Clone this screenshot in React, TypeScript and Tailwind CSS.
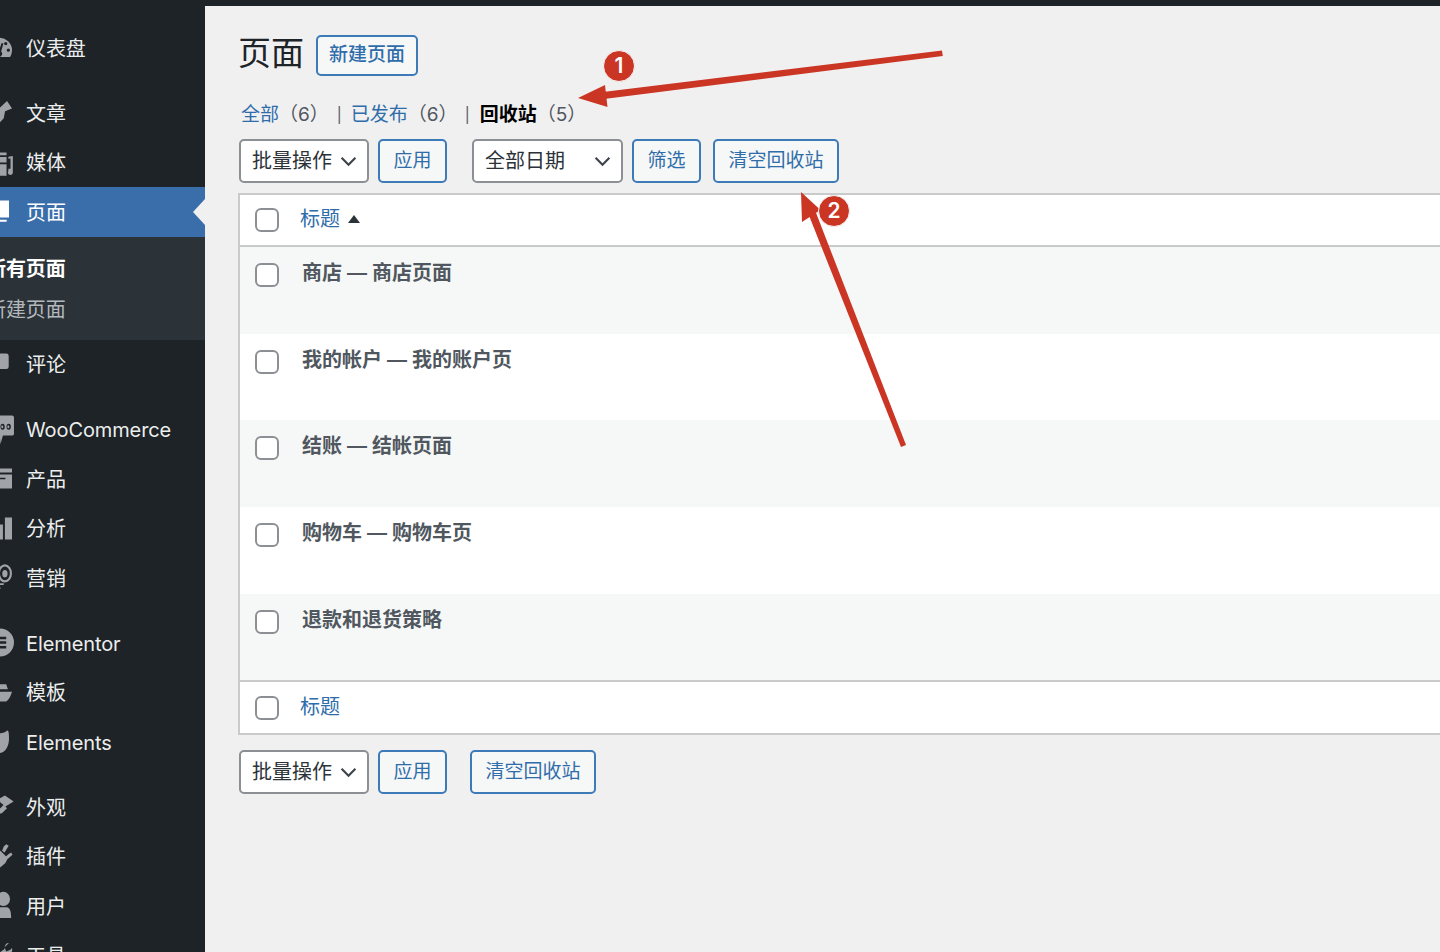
const font = "[font-family:Inter,'Noto_Sans_CJK_SC',sans-serif]";

// Admin menu icons, cut off by the left edge of the window like in the screenshot
const icons: Record<string, React.ReactNode> = {
  dashboard: (
    <path
      fillRule="evenodd"
      d="M12 4a8 7.500 0 0 0-8 7.500c0 1.500.5 3 1.200 4.300h13.600c.8-1.300 1.200-2.800 1.200-4.300A8 7.500 0 0 0 12 4Zm4.200 2.600a1 1 0 1 1 0 2 1 1 0 0 1 0-2Zm1.600 4a1 1 0 1 1 0 2 1 1 0 0 1 0-2ZM14.800 7.500 13.400 12.400a1.800 1.800 0 1 1-1.300-.4l1.600-4.800Z"
    />
  ),
  posts: <path d="M17 3 20 7.600 15.800 9.200 15 13.500 12.700 16 10 14 8 8 12.800 7Z" />,
  media: (
    <path d="M10 4h6.700v1.600H10Zm0 2.600h6.700V10H10Zm0 4.400h6.700v7H10ZM17.800 6.500 20.500 6v10a1.500 1.500 0 1 1-2.700-.9v-1.300h1.300V7.500l-1.300.2Z" />
  ),
  pages: <path d="M8 3.300h10.200v10.300H8Zm0 11.700h8.800v1.200H8Z" />,
  comments: <path d="M8 3.300h8.500A1.500 1.500 0 0 1 18 4.800v6.500a1.500 1.500 0 0 1-1.500 1.500H12l-3 2.500Z" />,
  woo: (
    <>
      <path d="M8 1.500h12a1.200 1.200 0 0 1 1.200 1.200v9.800a1.200 1.200 0 0 1-1.200 1.200h-5.500L13 19l-.3-4.300H8Z" />
      <path
        fill="#1d2327"
        fillRule="evenodd"
        d="M14.300 6.500a1.300 1.800 0 1 1 0 3.600 1.300 1.800 0 0 1 0-3.600Zm0 1a.6.9 0 1 0 0 1.700.6.9 0 0 0 0-1.700ZM18 6.500a1.300 1.800 0 1 1 0 3.600 1.300 1.800 0 0 1 0-3.600Zm0 1a.6.9 0 1 0 0 1.700.6.9 0 0 0 0-1.700Z"
      />
    </>
  ),
  products: <path d="M10 4h10v2.400H10Zm0 3.600h10V16H10Zm0 1.900v1h6v-1Z" />,
  analytics: <path d="M10 7.500h4.500v9.200H10Zm5.700-4.200H20v13.400h-4.300Z" />,
  marketing: (
    <>
      <path
        fillRule="evenodd"
        d="M15.700 2a4.300 5.500 0 1 1 0 11 4.300 5.500 0 0 1 0-11Zm0 1.300a3 4.200 0 1 0 0 8.400 3 4.200 0 0 0 0-8.400Z"
      />
      <path d="M15.700 5.500a1.600 2.200 0 1 1 0 4.400 1.600 2.200 0 0 1 0-4.400ZM10 13.500h5v1h-5Zm1 2.500h2v1h-2Z" />
    </>
  ),
  elementor: (
    <path
      fillRule="evenodd"
      d="M12.700 1.500a8.500 8.500 0 1 1 0 17 8.500 8.500 0 0 1 0-17ZM16.500 6.500H10V8h6.500Zm0 2.800H10v1.500h6.500Zm0 2.800H10v1.500h6.500Z"
    />
  ),
  templates: <path d="M10 5h6.500l1 3H10Zm0 4.500h10c-.8 2.500-2 5.500-4 6h-6Z" />,
  elements: <path d="M10 5c3 0 5.500 0 7-1.700 1-.3 1.200 1.700 1.200 4.700 0 5-2.200 9-6.200 9h-2Z" />,
  appearance: <path d="M12 5.500 15.700 3.300 21 7l-5 3-3-2.500ZM12 12l3-3 2 2-3 3-2 .5Z" />,
  plugins: (
    <path d="m15 4 1.500-1.500 1.500 1-2.500 4-1.500-1Zm3 4.500 1.500-1 .8 1.500-3.500 3-1-1.500ZM10 6l3 .5 4.500 4.500-1.500 3-3 2.500-3-.5Z" />
  ),
  users: (
    <path d="M14.800 1.700a4 4.300 0 1 1 0 8.600 4 4.300 0 0 1 0-8.600ZM9 11h8c2 .5 2.500 3 2.500 6.500H9Z" />
  ),
  tools: <path d="M18 2.500 15.500 5l1 2.500 2.500-1 1-1c.5 2-.5 4-3 4.500L10 17v-7l5.500-4c0-2 1-3.800 2.500-3.500Z" />,
};

type Item = { label: string; icon: string; active?: boolean; gap?: boolean };

const menu: Item[] = [
  { label: "文章", icon: "posts", gap: true },
  { label: "媒体", icon: "media" },
  { label: "页面", icon: "pages", active: true },
];

const menu2: Item[] = [
  { label: "评论", icon: "comments" },
  { label: "WooCommerce", icon: "woo", gap: true },
  { label: "产品", icon: "products" },
  { label: "分析", icon: "analytics" },
  { label: "营销", icon: "marketing" },
  { label: "Elementor", icon: "elementor", gap: true },
  { label: "模板", icon: "templates" },
  { label: "Elements", icon: "elements" },
  { label: "外观", icon: "appearance", gap: true },
  { label: "插件", icon: "plugins" },
  { label: "用户", icon: "users" },
  { label: "工具", icon: "tools" },
];

function MenuRow({ item }: { item: Item }) {
  return (
    <div
      className={`relative flex h-[49.5px] shrink-0 items-center text-[20px] tracking-[-0.1px] ${item.gap ? "mt-[15.5px]" : ""} ${
        item.active ? "bg-[#396eaa] text-white" : "text-[#eceded]"
      }`}
    >
      <svg
        viewBox="0 0 20 20"
        className={`ml-[-21px] mr-[14px] h-[33px] w-[33px] shrink-0 overflow-visible ${item.active ? "fill-white" : "fill-[#a0a4a8]"}`}
      >
        {icons[item.icon]}
      </svg>
      <span className="pt-[2px]">{item.label}</span>
      {item.active && (
        <span className="absolute right-0 top-1/2 h-0 w-0 -translate-y-1/2 border-y-[13px] border-r-[12px] border-y-transparent border-r-[#f0f0f1]" />
      )}
    </div>
  );
}

function Checkbox() {
  return <span className="block h-[24px] w-[24px] shrink-0 rounded-[6px] border-2 border-[#8c8f94] bg-white" />;
}

function Btn({ children, className = "" }: { children: React.ReactNode; className?: string }) {
  return (
    <button
      className={`flex items-center justify-center rounded-[5px] border-2 border-[#3d7ab8] bg-[#f6f7f7] text-[19px] text-[#2f6daa] ${className}`}
    >
      {children}
    </button>
  );
}

function Select({ label, className = "" }: { label: string; className?: string }) {
  return (
    <div
      className={`flex h-[44px] items-center justify-between rounded-[5px] border-2 border-[#8c8f94] bg-white pl-[11px] pr-[10px] text-[20px] text-[#2c3338] ${className}`}
    >
      {label}
      <svg viewBox="0 0 16 16" className="h-[17px] w-[17px] fill-none stroke-[#3c434a] stroke-[2]">
        <path d="m1.500 4.500 6.500 6.500 6.500-6.500" />
      </svg>
    </div>
  );
}

const rows = ["商店 — 商店页面", "我的帐户 — 我的账户页", "结账 — 结帐页面", "购物车 — 购物车页", "退款和退货策略"];

export default function App() {
  return (
    <div className={`relative flex h-[952px] w-[1440px] overflow-hidden bg-[#1d2327] ${font}`}>
      {/* Sidebar */}
      <aside className="flex w-[205px] shrink-0 flex-col overflow-hidden pt-[23px]">
        <MenuRow item={{ label: "仪表盘", icon: "dashboard" }} />
        {menu.map((item) => (
          <MenuRow key={item.label} item={item} />
        ))}
        <div className="flex h-[103px] shrink-0 flex-col bg-[#2c3338] pt-[11px] text-[20px] tracking-[-0.1px]">
          <div className="ml-[-14px] flex h-[41px] items-center pt-[1px] font-semibold text-white">所有页面</div>
          <div className="ml-[-14px] flex h-[41px] items-center pt-[1px] text-[#b4b9be]">新建页面</div>
        </div>
        {menu2.map((item) => (
          <MenuRow key={item.label} item={item} />
        ))}
      </aside>

      {/* Main */}
      <main className="mt-[6px] min-w-0 flex-1 bg-[#f0f0f1] pl-[33px]">
        <div className="flex h-[41px] items-center mt-[29px]">
          <h1 className="mb-[5px] text-[33px] leading-[36px] text-[#1d2327]">页面</h1>
          <Btn className="ml-[12px] h-[41px] w-[102px] font-medium">新建页面</Btn>
        </div>

        <div className="mt-[25px] flex h-[28px] items-center pl-[3px] text-[19px] text-[#50575e]">
          <span className="text-[#2f6daa]">全部</span>
          <span>（6）</span>
          <span className="ml-[8px] mr-[9px] text-[15px]">|</span>
          <span className="text-[#2f6daa]">已发布</span>
          <span>（6）</span>
          <span className="ml-[7px] mr-[10px] text-[15px]">|</span>
          <span className="font-semibold text-black">回收站</span>
          <span>（5）</span>
        </div>

        <div className="mt-[10px] flex h-[44px] items-center">
          <Select label="批量操作" className="ml-px w-[130px]" />
          <Btn className="ml-[9px] h-[44px] w-[69px]">应用</Btn>
          <Select label="全部日期" className="ml-[25px] w-[151px]" />
          <Btn className="ml-[9px] h-[44px] w-[69px]">筛选</Btn>
          <Btn className="ml-[12px] h-[44px] w-[126px]">清空回收站</Btn>
        </div>

        {/* Table */}
        <div className="mr-[-8px] mt-[10px] border-2 border-[#c9cacc] bg-white">
          <div className="flex h-[52px] items-center border-b-2 border-[#c9cacc] pl-[15px]">
            <Checkbox />
            <span className="mb-[3px] ml-[21px] text-[20px] text-[#2f6daa]">标题</span>
            <span className="mb-[3px] ml-[8px] h-0 w-0 border-x-[6px] border-b-[8px] border-x-transparent border-b-[#2c3338]" />
          </div>
          {rows.map((title, i) => (
            <div
              key={title}
              className={`flex h-[86.700px] items-start pl-[15px] pt-[14px] ${i % 2 === 0 ? "bg-[#f6f7f7]" : "bg-white"}`}
            >
              <span className="mt-[2px]">
                <Checkbox />
              </span>
              <span className="ml-[23px] text-[20px] font-semibold leading-[24px] text-[#50575e]">{title}</span>
            </div>
          ))}
          <div className="flex h-[53px] items-center border-t-2 border-[#c9cacc] pl-[15px]">
            <Checkbox />
            <span className="mb-[1px] ml-[21px] text-[20px] text-[#2f6daa]">标题</span>
          </div>
        </div>

        <div className="mt-[15px] flex h-[44px] items-center">
          <Select label="批量操作" className="ml-px w-[130px]" />
          <Btn className="ml-[9px] h-[44px] w-[69px]">应用</Btn>
          <Btn className="ml-[23px] h-[44px] w-[126px]">清空回收站</Btn>
        </div>
      </main>

      {/* Annotations drawn over the screenshot */}
      <svg viewBox="0 0 1440 952" className="pointer-events-none absolute inset-0 h-[952px] w-[1440px]">
        <g fill="#cb3524">
          <path d="M942 50.500 942.800 56 604 99 603 92Z" />
          <path d="M578 98 605 85 607.500 107Z" />
          <path d="M901 447 906 445 813 205 806 208Z" />
          <path d="M801 192 802 222 820.500 210Z" />
        </g>
      </svg>
      <span className="absolute left-[603px] top-[50px] flex h-[32px] w-[32px] items-center justify-center rounded-full border border-[#f6f6f6] bg-[#cb3524] text-[21px] font-semibold text-white">
        1
      </span>
      <span className="absolute left-[818px] top-[195px] flex h-[32px] w-[32px] items-center justify-center rounded-full border border-[#f6f6f6] bg-[#cb3524] text-[21px] font-semibold text-white">
        2
      </span>
    </div>
  );
}
